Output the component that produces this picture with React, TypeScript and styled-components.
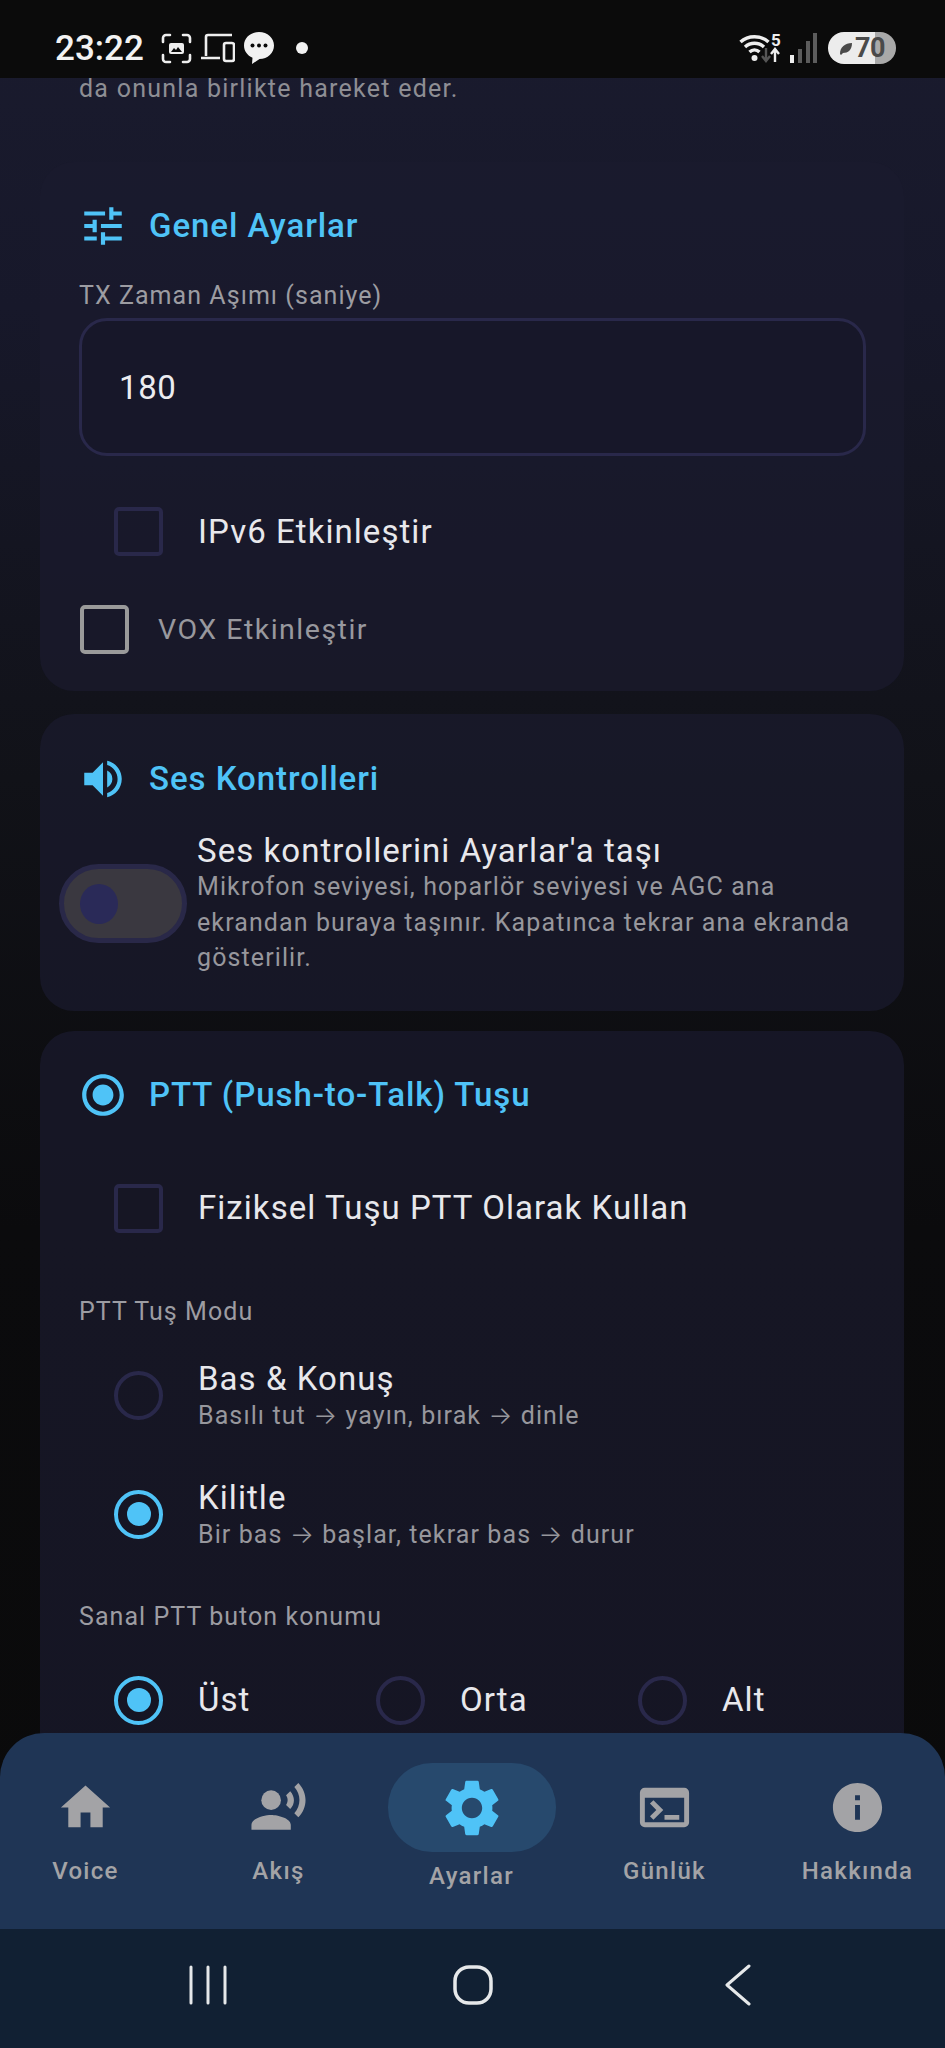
import React from "react";
import styled, { createGlobalStyle } from "styled-components";
import { MdHome, MdRecordVoiceOver, MdSettings, MdTerminal, MdInfo, MdTune, MdVolumeUp, MdRadioButtonChecked } from "react-icons/md";

const Global = createGlobalStyle`
  html, body { margin: 0; padding: 0; background: #0a0a0a; }
  * { box-sizing: border-box; }
  body { font-family: Roboto, "Noto Sans", sans-serif; }
`;

const Screen = styled.div`
  width: 945px; height: 2048px; display: flex; flex-direction: column; overflow: hidden;
  background: linear-gradient(180deg, #1a1b2e 0%, #17182a 15%, #111218 38%, #0b0b0d 60%, #0a0a0a 100%);
`;
const StatusBar = styled.div`
  height: 78px; flex: none; background: #0b0b0b; display: flex; align-items: center;
  justify-content: space-between; padding: 18px 49px 0 55px; position: relative; z-index: 2;
`;
const StatusGroup = styled.div`display: flex; align-items: center;`;
const Time = styled.span`
  color: #f2f2f2; font-size: 35px; font-weight: 500; width: 106px; letter-spacing: 0; line-height: 1;
`;
const StatusIcon = styled.svg<{ $gap?: number }>`
  display: block; flex: none; margin-right: ${p => p.$gap ?? 0}px;
`;
const Battery = styled.div`
  width: 68px; height: 32px; border-radius: 16px; margin-left: 10px; display: flex; align-items: center;
  padding-left: 11px; gap: 3px;
  background: linear-gradient(90deg, #ececec 0 69%, #a9a9a9 69% 100%);
`;
const BatteryText = styled.span`
  color: #4a4a4a; font-size: 27px; font-weight: 700; line-height: 1; letter-spacing: -0.5px;
`;
const Scroll = styled.div`
  flex: 1; min-height: 0; overflow: hidden; display: flex; flex-direction: column;
`;
const LeadText = styled.p`
  margin: -7px 0 0 79px; font-size: 25px; line-height: 36px; letter-spacing: 1.25px; color: #8e8e94; flex: none;
`;
const Card = styled.section<{ $top: number }>`
  flex: none; margin: ${p => p.$top}px 41px 0 40px; border-radius: 34px; padding: 0 39px;
  background: rgba(26, 26, 46, 0.72); position: relative;
`;
const CardHead = styled.h2<{ $top: number }>`
  margin: 0; padding-top: ${p => p.$top}px; display: flex; align-items: center; gap: 21px;
  font-size: 33px; font-weight: 500; line-height: 50px; color: #4fc3f7; letter-spacing: 0.95px;
  svg { flex: none; margin-left: -1px; }
`;
const FieldLabel = styled.div<{ $top: number }>`
  margin-top: ${p => p.$top}px; font-size: 25px; line-height: 32px; letter-spacing: 1.05px; color: #9c9ca2;
`;
const InputBox = styled.div`
  margin-top: 6px; height: 138px; width: 787px; border: 3px solid #29284a; border-radius: 28px;
  background: #171729; display: flex; align-items: center; padding-left: 37px;
  font-size: 33px; color: #ececf0; letter-spacing: 0.6px;
`;
const CheckRow = styled.div<{ $top: number; $inset?: boolean }>`
  margin-top: ${p => p.$top}px; margin-left: ${p => (p.$inset ? 35 : 1)}px; display: flex; align-items: center;
  gap: ${p => (p.$inset ? 35 : 29)}px;
`;
const Box = styled.div<{ $muted?: boolean }>`
  width: 49px; height: 49px; flex: none; border-radius: 5px; border: 4px solid ${p => (p.$muted ? "#9a9a9a" : "#29284a")};
`;
const RowText = styled.span<{ $muted?: boolean }>`
  font-size: ${p => (p.$muted ? 28.5 : 33)}px; line-height: 40px; color: ${p => (p.$muted ? "#98989e" : "#e8e8ec")};
  letter-spacing: ${p => (p.$muted ? 1.5 : 1.05)}px;
`;
const CardEnd = styled.div<{ $h: number }>`height: ${p => p.$h}px;`;
const SwitchRow = styled.div`
  display: flex; align-items: center; margin: 28px 0 0 -20px; gap: 10px;
`;
const Toggle = styled.div`
  width: 128px; height: 79px; flex: none; border-radius: 40px; border: 5px solid #292848; background: #3a3840;
  display: flex; align-items: center; padding-left: 16px;
`;
const Thumb = styled.div`width: 38px; height: 40px; border-radius: 50%; background: #2a2a58;`;
const TextStack = styled.div`display: flex; flex-direction: column;`;
const Title = styled.div`
  font-size: 33px; line-height: 38px; color: #e8e8ec; letter-spacing: 1.05px;
`;
const Desc = styled.div`
  font-size: 25px; line-height: 35.5px; color: #97979d; letter-spacing: 1.1px; margin-top: -1px; width: 680px;
`;
const OptionRow = styled.div<{ $top: number }>`
  margin-top: ${p => p.$top}px; margin-left: 35px; display: flex; align-items: center; gap: 35px;
`;
const Radio = styled.div<{ $on?: boolean }>`
  width: 49px; height: 49px; flex: none; border-radius: 50%; border: 4px solid ${p => (p.$on ? "#4fc3f7" : "#29284a")};
  display: flex; align-items: center; justify-content: center;
  &::after { content: ""; width: 24px; height: 24px; border-radius: 50%; background: ${p => (p.$on ? "#4fc3f7" : "transparent")}; }
`;
const OptionSub = styled.div`
  font-size: 25px; line-height: 30px; color: #97979d; letter-spacing: 1.1px; margin-top: 2px;
`;
const Arrow = styled.span`
  font-family: Inter, "Liberation Sans", sans-serif; font-weight: 300;
`;
const PositionRow = styled.div`
  margin: 43px 0 90px 35px; display: grid; grid-template-columns: repeat(3, 262px);
`;
const PositionItem = styled.div`display: flex; align-items: center; gap: 35px;`;
const BottomNav = styled.nav`
  flex: none; height: 196px; margin-top: -40px; position: relative; z-index: 1; background: #1f3555;
  border-radius: 44px 44px 0 0; display: grid; grid-template-columns: repeat(5, 193px); justify-content: center;
  padding-right: 2px; overflow: hidden;
`;
const NavItem = styled.div`
  display: flex; flex-direction: column; align-items: center; padding-top: 44px; color: #a3a3a6;
`;
const NavIconWrap = styled.div<{ $active?: boolean }>`
  display: flex; align-items: center; justify-content: center;
  ${p => p.$active
    ? "width: 168px; height: 89px; border-radius: 44px; background: #27496d; margin-top: -14px; color: #4fc3f7;"
    : "height: 60px;"}
`;
const NavLabel = styled.span<{ $active?: boolean }>`
  font-size: 24px; line-height: 30px; letter-spacing: 1.3px; font-weight: 500; margin-top: ${p => (p.$active ? 9 : 19)}px; color: #a3a3a6;
`;
const SystemBar = styled.div`
  flex: none; height: 119px; background: #112033; display: flex; align-items: center; padding: 0 0 8px 0;
  justify-content: center;
`;
const SysSlot = styled.div`width: 265px; display: flex; align-items: center; justify-content: center;`;

const NAV = [
  { label: "Voice", icon: <MdHome size={59} /> },
  { label: "Akış", icon: <MdRecordVoiceOver size={59} /> },
  { label: "Ayarlar", icon: <MdSettings size={68} />, active: true },
  { label: "Günlük", icon: <MdTerminal size={59} /> },
  { label: "Hakkında", icon: <MdInfo size={59} /> },
];

export default function App() {
  return (
    <Screen>
      <Global />
      <StatusBar>
        <StatusGroup>
          <Time>23:22</Time>
          <StatusIcon $gap={9} width="31" height="31" viewBox="0 0 31 31" fill="none" stroke="#eee" strokeWidth="2.6" strokeLinecap="round">
            <path d="M2 9V5a3 3 0 0 1 3-3h4M22 2h4a3 3 0 0 1 3 3v4M29 22v4a3 3 0 0 1-3 3h-4M9 29H5a3 3 0 0 1-3-3v-4" />
            <rect x="8" y="10" width="15" height="11" rx="2" fill="#eee" stroke="none" />
            <path d="M10 19l3-4 2 2 2-3 4 5z" fill="#0b0b0b" stroke="none" />
          </StatusIcon>
          <StatusIcon $gap={8} width="34" height="30" viewBox="0 0 34 30" fill="none" stroke="#eee" strokeWidth="2.6">
            <path d="M31 2H7a2 2 0 0 0-2 2v19M0 25h19" />
            <rect x="23" y="10" width="10" height="18" rx="2" />
          </StatusIcon>
          <StatusIcon $gap={21} width="32" height="34" viewBox="0 0 32 34">
            <path d="M16 1C7.5 1 1 7 1 14.5c0 5.5 3.400 10 8.500 12.300L9 33l7.500-5C24.800 28 31 21.800 31 14.500 31 7 24.500 1 16 1z" fill="#f2f2f2" />
            <circle cx="9.500" cy="14.500" r="2" fill="#0b0b0b" /><circle cx="16" cy="14.500" r="2" fill="#0b0b0b" /><circle cx="22.500" cy="14.500" r="2" fill="#0b0b0b" />
          </StatusIcon>
          <StatusIcon width="12" height="12" viewBox="0 0 12 12"><circle cx="6" cy="6" r="6" fill="#f2f2f2" /></StatusIcon>
        </StatusGroup>
        <StatusGroup>
          <StatusIcon $gap={8} width="43" height="30" viewBox="0 0 43 30" fill="none">
            <path d="M1.500 9C9 2 22 2 29.500 9" stroke="#eee" strokeWidth="3.400" />
            <path d="M6 14c5.500-5 13.500-5 19 0" stroke="#eee" strokeWidth="3.400" />
            <path d="M10.500 19c3-2.800 7-2.800 10 0" stroke="#eee" strokeWidth="3.400" />
            <circle cx="15.500" cy="25" r="3" fill="#eee" />
            <text x="32" y="13" fontFamily="Roboto, sans-serif" fontWeight="700" fontSize="17" fill="#eee">5</text>
            <path d="M27 15v12m-4-4l4 5 4-5" stroke="#555" strokeWidth="2.400" />
            <path d="M36 29V17m-4 4l4-5 4 5" stroke="#eee" strokeWidth="2.400" />
          </StatusIcon>
          <StatusIcon width="28" height="30" viewBox="0 0 28 30">
            <rect x="0" y="22" width="4" height="8" fill="#eee" />
            <rect x="8" y="16" width="4" height="14" fill="#5c5c5c" />
            <rect x="16" y="8" width="4" height="22" fill="#5c5c5c" />
            <rect x="23" y="0" width="4" height="30" fill="#5c5c5c" />
          </StatusIcon>
          <Battery>
            <StatusIcon width="13" height="13" viewBox="0 0 13 13"><path d="M1 12C1 5 6 1 13 1c0 7-4 10-9 10l-2 2z" fill="#4a4a4a" /></StatusIcon>
            <BatteryText>70</BatteryText>
          </Battery>
        </StatusGroup>
      </StatusBar>
      <Scroll>
        <LeadText>da onunla birlikte hareket eder.</LeadText>
        <Card $top={55}>
          <CardHead $top={39}><MdTune size={50} color="#4fc3f7" />Genel Ayarlar</CardHead>
          <FieldLabel $top={29}>TX Zaman Aşımı (saniye)</FieldLabel>
          <InputBox>180</InputBox>
          <CheckRow $top={51} $inset><Box /><RowText>IPv6 Etkinleştir</RowText></CheckRow>
          <CheckRow $top={49}><Box $muted /><RowText $muted>VOX Etkinleştir</RowText></CheckRow>
          <CardEnd $h={37} />
        </Card>
        <Card $top={23}>
          <CardHead $top={40}><MdVolumeUp size={50} color="#4fc3f7" />Ses Kontrolleri</CardHead>
          <SwitchRow>
            <Toggle><Thumb /></Toggle>
            <TextStack>
              <Title>Ses kontrollerini Ayarlar'a taşı</Title>
              <Desc>Mikrofon seviyesi, hoparlör seviyesi ve AGC ana ekrandan buraya taşınır. Kapatınca tekrar ana ekranda gösterilir.</Desc>
            </TextStack>
          </SwitchRow>
          <CardEnd $h={35} />
        </Card>
        <Card $top={20}>
          <CardHead $top={39}><MdRadioButtonChecked size={50} color="#4fc3f7" />PTT (Push-to-Talk) Tuşu</CardHead>
          <CheckRow $top={64} $inset><Box /><RowText>Fiziksel Tuşu PTT Olarak Kullan</RowText></CheckRow>
          <FieldLabel $top={63}>PTT Tuş Modu</FieldLabel>
          <OptionRow $top={32}>
            <Radio />
            <TextStack><Title>Bas &amp; Konuş</Title><OptionSub>Basılı tut <Arrow>→</Arrow> yayın, bırak <Arrow>→</Arrow> dinle</OptionSub></TextStack>
          </OptionRow>
          <OptionRow $top={48}>
            <Radio $on />
            <TextStack><Title>Kilitle</Title><OptionSub>Bir bas <Arrow>→</Arrow> başlar, tekrar bas <Arrow>→</Arrow> durur</OptionSub></TextStack>
          </OptionRow>
          <FieldLabel $top={51}>Sanal PTT buton konumu</FieldLabel>
          <PositionRow>
            <PositionItem><Radio $on /><RowText>Üst</RowText></PositionItem>
            <PositionItem><Radio /><RowText>Orta</RowText></PositionItem>
            <PositionItem><Radio /><RowText>Alt</RowText></PositionItem>
          </PositionRow>
        </Card>
      </Scroll>
      <BottomNav>
        {NAV.map(item => (
          <NavItem key={item.label}>
            <NavIconWrap $active={item.active}>{item.icon}</NavIconWrap>
            <NavLabel $active={item.active}>{item.label}</NavLabel>
          </NavItem>
        ))}
      </BottomNav>
      <SystemBar>
        <SysSlot>
          <StatusIcon width="38" height="40" viewBox="0 0 38 40" fill="none" stroke="#e6e8ea" strokeWidth="3" strokeLinecap="round">
            <path d="M2 2v36M19 2v36M36 2v36" />
          </StatusIcon>
        </SysSlot>
        <SysSlot>
          <StatusIcon width="40" height="40" viewBox="0 0 40 40" fill="none" stroke="#e6e8ea" strokeWidth="3.500">
            <rect x="2" y="2" width="36" height="36" rx="14" />
          </StatusIcon>
        </SysSlot>
        <SysSlot>
          <StatusIcon width="26" height="42" viewBox="0 0 26 42" fill="none" stroke="#e6e8ea" strokeWidth="3" strokeLinecap="round" strokeLinejoin="round">
            <path d="M24 2L2 21l22 19" />
          </StatusIcon>
        </SysSlot>
      </SystemBar>
    </Screen>
  );
}
